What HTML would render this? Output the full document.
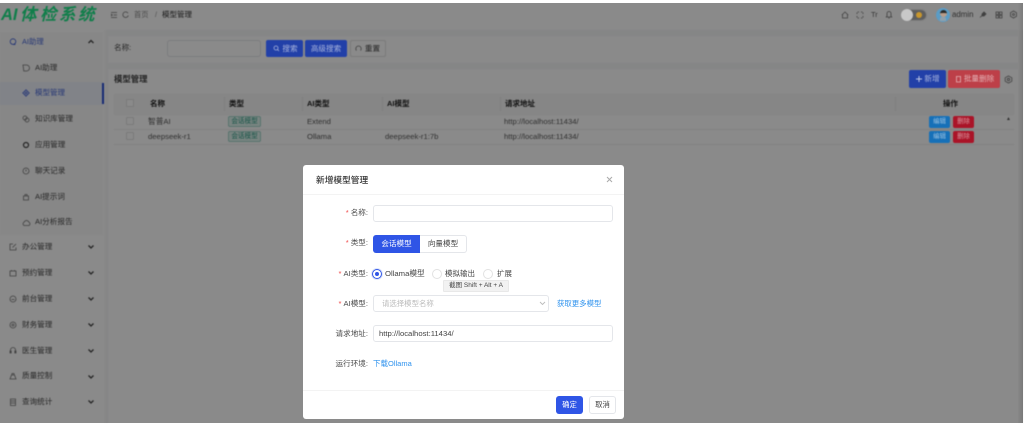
<!DOCTYPE html>
<html><head><meta charset="utf-8"><style>
html,body{margin:0;padding:0;width:1024px;height:424px;overflow:hidden;background:#fff}
*{box-sizing:border-box}
body{font-family:"Liberation Sans","Noto Sans CJK SC",sans-serif;color:#333}
.abs,.t{position:absolute}
.t{white-space:nowrap;line-height:14px}
#page{position:absolute;left:0;top:3px;width:1024px;height:420px;background:#fff;overflow:hidden;filter:blur(.45px)}
#main{position:absolute;left:0;top:-3px;width:1024px;height:424px}
#overlay{position:absolute;left:0;top:3px;width:1023px;height:420px;background:rgba(0,0,0,.46)}
#rstrip{position:absolute;left:1018px;top:3px;width:5px;height:420px;background:linear-gradient(90deg,rgba(0,0,0,0),rgba(0,0,0,.1))}
#top{position:absolute;left:0;top:0;width:1024px;height:424px;filter:blur(.45px)}
#modal{position:absolute;left:303px;top:165px;width:321px;height:254px;background:#fff;border-radius:3px;filter:blur(.35px)}
.m{font-size:7.6px;color:#4a4a4a}
.s{font-size:7.7px;color:#5a5a5a}
.h{font-size:7.5px;font-weight:bold;color:#222}
.ic{position:absolute;fill:none;stroke:#777;stroke-width:.8}
.chev{position:absolute;left:87px;width:8px;height:6px;fill:none;stroke:#444;stroke-width:1.3}
.btn{position:absolute;border-radius:2px;color:rgba(255,255,255,.6);font-size:7.6px;text-align:center;line-height:17px;white-space:nowrap}
.tag{position:absolute;left:228px;width:33px;height:11px;background:#dff4ee;border:1px solid #a4d8cc;border-radius:2px;font-size:6.6px;color:#2f9e86;text-align:center;line-height:9px}
.cb{position:absolute;left:126px;width:8px;height:8px;background:#fff;border:1px solid #e2e2e2;border-radius:1.5px}
.ed{position:absolute;left:929px;width:21px;height:12px;background:#1670b8;border-radius:2px;color:rgba(255,255,255,.55);font-size:6.4px;text-align:center;line-height:12px}
.de{position:absolute;left:953px;width:21px;height:12px;background:#aa1428;border-radius:2px;color:rgba(255,255,255,.55);font-size:6.4px;text-align:center;line-height:12px}
.inp{position:absolute;background:#fff;border:1px solid #e4e6ea;border-radius:3px;height:17px}
.lab{position:absolute;font-size:7.6px;color:#4a4a4a;text-align:right;white-space:nowrap;line-height:14px;width:63px;left:2px}
.lab b{color:#f04a4a;font-weight:normal;margin-right:2px}
.sep{position:absolute;top:97px;width:1px;height:14px;background:#ececec}
.lg{position:absolute;top:5px;font-size:16.5px;line-height:20px;font-weight:bold;font-style:italic;color:#107e4a;white-space:nowrap}
</style></head><body>
<div id="page"><div id="main">
  <div class="abs" style="left:0;top:0;width:1024px;height:424px;background:#fafafa"></div>
  <div class="abs" style="left:0;top:30px;width:104px;height:394px;background:#fff"></div>
  <div class="abs" style="left:106px;top:30px;width:912px;height:394px;background:#f6f7f8"></div>
  <div class="abs" style="left:0;top:3px;width:1024px;height:27px;background:#fff"></div>
  <div class="abs" style="left:0;top:32px;width:103px;height:23px;background:#fafafa"></div>
  <div class="abs" style="left:0;top:55px;width:103px;height:180px;background:#f9f9f9"></div>
  <div class="abs" style="left:0;top:82px;width:103px;height:23px;background:#eef2fb"></div>
  <div class="abs" style="left:102px;top:83px;width:1.5px;height:21px;background:#2b4fd8"></div>

  <!-- breadcrumb -->
  <svg class="ic" style="left:110px;top:11px" width="8" height="8" viewBox="0 0 8 8"><path d="M1 1.500h6M3.500 4H7M1 6.500h6M1 3l1.300 1L1 5"/></svg>
  <svg class="ic" style="left:122px;top:11px" width="7" height="8" viewBox="0 0 7 8"><path d="M6 2.200A2.800 2.800 0 1 0 6.300 4.500"/></svg>
  <div class="t" style="left:134px;top:8px;font-size:7.200px;color:#8a8a8a">首页</div>
  <div class="t" style="left:155px;top:8px;font-size:7.200px;color:#999">/</div>
  <div class="t" style="left:162px;top:8px;font-size:7.500px;color:#333">模型管理</div>

  <!-- header right -->
  <svg class="ic" style="left:841px;top:11px" width="8" height="8" viewBox="0 0 8 8"><path d="M.8 4 4 1l3.200 3M1.500 3.500V7h5V3.500"/></svg>
  <svg class="ic" style="left:856px;top:11px" width="8" height="8" viewBox="0 0 8 8"><path d="M1 3V1.500M1.500 1H3M5 1h1.500M7 1.500V3M7 5v1.500M6.500 7H5M3 7H1.500M1 6.500V5"/></svg>
  <div class="t" style="left:871px;top:8px;font-size:7.500px;color:#666">Tr</div>
  <svg class="ic" style="left:885px;top:10px" width="8" height="9" viewBox="0 0 8 9"><path d="M2 6V3.500a2 2 0 0 1 4 0V6l.7 1H1.300zM3.300 8h1.400"/></svg>
  <div class="t" style="left:952px;top:8px;font-size:7.900px;color:#5a5a5a">admin</div>
  <svg class="ic" style="left:979px;top:11px" width="8" height="8" viewBox="0 0 8 8"><path d="M1 6.500 3 4.500M3 3l2-2 2 2-2 2H3z" style="fill:#777"/></svg>
  <svg class="ic" style="left:995px;top:11px" width="8" height="8" viewBox="0 0 8 8"><path d="M1 1h2.500v2.500H1zM4.500 1H7v2.500H4.500zM1 4.500h2.500V7H1zM4.500 4.500H7V7H4.500z"/></svg>
  <svg class="ic" style="left:1009px;top:10px" width="9" height="9" viewBox="0 0 9 9"><path d="M4.500 1 7.500 2.700v3.600L4.500 8 1.500 6.300V2.700z"/><circle cx="4.500" cy="4.500" r="1"/></svg>

  <!-- sidebar items -->
  <svg class="ic" style="left:9px;top:38px;stroke:#3f5fd8" width="8" height="8" viewBox="0 0 8 8"><circle cx="4" cy="3.600" r="2.800"/><path d="M4 6.500h2.500"/></svg>
  <div class="t" style="left:22px;top:35px;font-size:7.400px;color:#4a68d8">AI助理</div>
  <svg class="chev" style="top:39px;left:87px;width:8px;height:5px" viewBox="0 0 8 5"><path d="M1.500 4 4 1.500 6.500 4"/></svg>

  <svg class="ic" style="left:22px;top:64px" width="8" height="8" viewBox="0 0 8 8"><path d="M1 1h3.500a3 3 0 0 1 0 6H1.800z"/></svg>
  <div class="t m" style="left:35px;top:61px">AI助理</div>
  <svg class="ic" style="left:22px;top:89px;stroke:#3f5fd8" width="8" height="8" viewBox="0 0 8 8"><path d="M4 .8 7.200 4 4 7.200.8 4z"/><circle cx="4" cy="4" r="1"/></svg>
  <div class="t" style="left:35px;top:86px;font-size:7.500px;color:#4a68d8">模型管理</div>
  <svg class="ic" style="left:22px;top:115px" width="8" height="8" viewBox="0 0 8 8"><circle cx="3" cy="3" r="2"/><circle cx="5" cy="5" r="2"/></svg>
  <div class="t m" style="left:35px;top:112px">知识库管理</div>
  <svg class="ic" style="left:22px;top:141px;stroke:#444;stroke-width:1.200" width="8" height="8" viewBox="0 0 8 8"><circle cx="4" cy="4" r="2.500"/></svg>
  <div class="t m" style="left:35px;top:138px">应用管理</div>
  <svg class="ic" style="left:22px;top:167px" width="8" height="8" viewBox="0 0 8 8"><circle cx="4" cy="4" r="3"/><path d="M4 2.500V4.500"/></svg>
  <div class="t m" style="left:35px;top:164px">聊天记录</div>
  <svg class="ic" style="left:22px;top:193px" width="8" height="8" viewBox="0 0 8 8"><path d="M1.500 3h5v4h-5zM3 3V1.500h2V3"/></svg>
  <div class="t m" style="left:35px;top:190px">AI提示词</div>
  <svg class="ic" style="left:22px;top:219px" width="9" height="8" viewBox="0 0 9 8"><path d="M2 6.500a2 2 0 0 1 .2-3.500 2.500 2.500 0 0 1 4.600 0A2 2 0 0 1 7 6.500z"/></svg>
  <div class="t m" style="left:35px;top:215px">AI分析报告</div>

  <svg class="ic" style="left:9px;top:243px" width="8" height="8" viewBox="0 0 8 8"><path d="M7 4.500V7H1V1h3M3.500 4.500 7 1"/></svg>
  <div class="t m" style="left:22px;top:240px">办公管理</div>
  <svg class="chev" style="top:244px" viewBox="0 0 8 6"><path d="M1.500 1.500 4 4 6.500 1.500"/></svg>
  <svg class="ic" style="left:9px;top:269px" width="8" height="8" viewBox="0 0 8 8"><path d="M1 2h6v5H1zM2.500 1v1.500M5.500 1v1.500"/></svg>
  <div class="t m" style="left:22px;top:266px">预约管理</div>
  <svg class="chev" style="top:270px" viewBox="0 0 8 6"><path d="M1.500 1.500 4 4 6.500 1.500"/></svg>
  <svg class="ic" style="left:9px;top:295px" width="8" height="8" viewBox="0 0 8 8"><circle cx="4" cy="4" r="3"/><path d="M2.500 4.500h3"/></svg>
  <div class="t m" style="left:22px;top:292px">前台管理</div>
  <svg class="chev" style="top:296px" viewBox="0 0 8 6"><path d="M1.500 1.500 4 4 6.500 1.500"/></svg>
  <svg class="ic" style="left:9px;top:321px" width="8" height="8" viewBox="0 0 8 8"><circle cx="4" cy="4" r="3"/><circle cx="4" cy="4" r="1"/></svg>
  <div class="t m" style="left:22px;top:318px">财务管理</div>
  <svg class="chev" style="top:322px" viewBox="0 0 8 6"><path d="M1.500 1.500 4 4 6.500 1.500"/></svg>
  <svg class="ic" style="left:9px;top:346px" width="8" height="8" viewBox="0 0 8 8"><path d="M1.500 7V4a2.500 2.500 0 0 1 5 0v3M1 5h1.200v2H1zM5.800 5H7v2H5.800z"/></svg>
  <div class="t m" style="left:22px;top:344px">医生管理</div>
  <svg class="chev" style="top:348px" viewBox="0 0 8 6"><path d="M1.500 1.500 4 4 6.500 1.500"/></svg>
  <svg class="ic" style="left:9px;top:372px" width="8" height="8" viewBox="0 0 8 8"><path d="M1 7 2.500 3h3L7 7zM3 3V1.500h2V3"/></svg>
  <div class="t m" style="left:22px;top:369px">质量控制</div>
  <svg class="chev" style="top:374px" viewBox="0 0 8 6"><path d="M1.500 1.500 4 4 6.500 1.500"/></svg>
  <svg class="ic" style="left:9px;top:398px" width="8" height="8" viewBox="0 0 8 8"><path d="M1.500 1h5v6.500h-5zM1.500 3h5M1.500 5h5"/></svg>
  <div class="t m" style="left:22px;top:395px">查询统计</div>
  <svg class="chev" style="top:399px" viewBox="0 0 8 6"><path d="M1.500 1.500 4 4 6.500 1.500"/></svg>

  <!-- search panel -->
  <div class="abs" style="left:108px;top:36px;width:910px;height:27px;background:#fff"></div>
  <div class="t" style="left:114px;top:41px;color:#4a4a4a;font-size:7.600px">名称:</div>
  <div class="inp" style="left:167px;top:40px;width:94px"></div>
  <div class="btn" style="left:350px;top:40px;width:36px;height:17px;background:#fff;border:1px solid #e2e2e2;color:#444;line-height:15px;padding-left:9px">重置</div>
  <svg class="ic" style="left:355px;top:45px" width="7" height="7" viewBox="0 0 7 7"><path d="M1.500 5.500A2.700 2.700 0 1 1 5.500 5.500"/></svg>

  <!-- table card -->
  <div class="abs" style="left:108px;top:69px;width:910px;height:355px;background:#fff"></div>
  <div class="t" style="left:114px;top:72px;font-size:8.400px;font-weight:bold;color:#444">模型管理</div>
  <svg class="ic" style="left:1004px;top:75px" width="9" height="9" viewBox="0 0 9 9"><path d="M4.500 1 7.800 2.700v3.600L4.500 8 1.200 6.300V2.700z"/><circle cx="4.500" cy="4.500" r="1.200"/></svg>

  <div class="abs" style="left:114px;top:94px;width:900px;height:21px;background:#f7f7f7"></div>
  <div class="sep" style="left:224px"></div><div class="sep" style="left:302px"></div><div class="sep" style="left:382px"></div><div class="sep" style="left:500px"></div><div class="sep" style="left:895px"></div>
  <div class="cb" style="top:99px"></div>
  <div class="t h" style="left:150px;top:97px">名称</div>
  <div class="t h" style="left:229px;top:97px">类型</div>
  <div class="t h" style="left:307px;top:97px">AI类型</div>
  <div class="t h" style="left:387px;top:97px">AI模型</div>
  <div class="t h" style="left:505px;top:97px">请求地址</div>
  <div class="t h" style="left:943px;top:97px">操作</div>

  <div class="cb" style="top:117px"></div>
  <div class="t s" style="left:148px;top:115px">智普AI</div>
  <div class="tag" style="top:116px">会话模型</div>
  <div class="t s" style="left:307px;top:115px">Extend</div>
  <div class="t s" style="left:504px;top:115px">http://localhost:11434/</div>
  <div class="abs" style="left:114px;top:129px;width:900px;height:1px;background:#eee"></div>

  <div class="cb" style="top:132px"></div>
  <div class="t s" style="left:148px;top:130px">deepseek-r1</div>
  <div class="tag" style="top:131px">会话模型</div>
  <div class="t s" style="left:307px;top:130px">Ollama</div>
  <div class="t s" style="left:385px;top:130px">deepseek-r1:7b</div>
  <div class="t s" style="left:504px;top:130px">http://localhost:11434/</div>
  <div class="abs" style="left:114px;top:144px;width:900px;height:1px;background:#eee"></div>
  <div class="t" style="left:1006px;top:112px;font-size:5px;color:#555">▲</div>
</div></div>

<div id="overlay"></div>
<div id="rstrip"></div>

<div id="top">
  <div class="lg" style="left:1px">AI</div>
  <div class="lg" style="left:20px">体</div>
  <div class="lg" style="left:40px">检</div>
  <div class="lg" style="left:59px">系</div>
  <div class="lg" style="left:78px">统</div>

  <div class="abs" style="left:901px;top:9px;width:26px;height:12px;border-radius:6px;background:#5e5e5e;border:1px solid #7f7f7f"></div>
  <div class="abs" style="left:901px;top:9px;width:12px;height:12px;border-radius:50%;background:#c8c8c8"></div>
  <div class="abs" style="left:916px;top:12px;width:6px;height:6px;border-radius:50%;background:#c8962c"></div>
  <div class="abs" style="left:936px;top:8px;width:14px;height:14px;border-radius:50%;background:#5a9cc6"></div>
  <div class="abs" style="left:939.500px;top:10px;width:7px;height:7px;border-radius:50%;background:#b89c8a;border-top:3px solid #2a2a2a"></div>
  <div class="abs" style="left:940px;top:17px;width:6px;height:4px;background:#8fa0ac;border-radius:2px 2px 0 0"></div>

  <div class="btn" style="left:266px;top:40px;width:37px;height:17px;background:#2240a8;padding-left:11px">搜索</div>
  <svg class="abs" style="left:273px;top:45px" width="7" height="7" viewBox="0 0 7 7"><circle cx="3" cy="3" r="2" fill="none" stroke="rgba(255,255,255,.6)" stroke-width=".8"/><path d="M4.500 4.500 6 6" stroke="rgba(255,255,255,.6)" stroke-width=".8"/></svg>
  <div class="btn" style="left:305px;top:40px;width:42px;height:17px;background:#2240a8">高级搜索</div>

  <div class="btn" style="left:909px;top:70px;width:37px;height:18px;background:#2240a8;line-height:18px;padding-left:9px">新增</div>
  <svg class="abs" style="left:915px;top:75px" width="8" height="8" viewBox="0 0 8 8"><path d="M4 1v6M1 4h6" stroke="rgba(255,255,255,.7)" stroke-width="1"/></svg>
  <div class="btn" style="left:948px;top:70px;width:52px;height:18px;background:#bd3f48;line-height:18px;padding-left:10px">批量删除</div>
  <svg class="abs" style="left:955px;top:75px" width="7" height="8" viewBox="0 0 7 8"><path d="M1.500 1.500h4V7h-4zM1 1.500h5" fill="none" stroke="rgba(255,255,255,.6)" stroke-width=".8"/></svg>

  <div class="ed" style="top:116px">编辑</div><div class="de" style="top:116px">删除</div>
  <div class="ed" style="top:131px">编辑</div><div class="de" style="top:131px">删除</div>
</div>

<div id="modal">
  <div class="t" style="left:13px;top:8px;font-size:8.700px;color:#333;font-weight:500">新增模型管理</div>
  <svg class="abs" style="left:303px;top:11px" width="7" height="7" viewBox="0 0 7 7"><path d="M1 1l5 5M6 1 1 6" stroke="#aaa" stroke-width="1" fill="none"/></svg>
  <div class="abs" style="left:0;top:29px;width:321px;height:1px;background:#f3f3f3"></div>

  <div class="lab" style="top:41px"><b>*</b>名称:</div>
  <div class="inp" style="left:70px;top:40px;width:240px"></div>

  <div class="lab" style="top:71px"><b>*</b>类型:</div>
  <div class="abs" style="left:70px;top:70px;width:47px;height:18px;background:#2f55e6;border-radius:3px 0 0 3px;color:#fff;font-size:7.600px;text-align:center;line-height:18px">会话模型</div>
  <div class="abs" style="left:117px;top:70px;width:47px;height:18px;background:#fff;border:1px solid #e4e6ea;border-left:0;border-radius:0 3px 3px 0;color:#444;font-size:7.600px;text-align:center;line-height:16px">向量模型</div>

  <div class="lab" style="top:102px"><b>*</b>AI类型:</div>
  <div class="abs" style="left:69px;top:104px;width:10px;height:10px;border-radius:50%;border:1px solid #2f55e6;box-shadow:0 0 0 1px #dfe6fc"></div>
  <div class="abs" style="left:72px;top:107px;width:4px;height:4px;border-radius:50%;background:#2f55e6"></div>
  <div class="t" style="left:82px;top:102px;font-size:7.700px;color:#444">Ollama模型</div>
  <div class="abs" style="left:129px;top:104px;width:10px;height:10px;border-radius:50%;border:1px solid #e2e2e2"></div>
  <div class="t" style="left:142px;top:102px;font-size:7.500px;color:#444">模拟输出</div>
  <div class="abs" style="left:180px;top:104px;width:10px;height:10px;border-radius:50%;border:1px solid #e2e2e2"></div>
  <div class="t" style="left:194px;top:102px;font-size:7.500px;color:#444">扩展</div>
  <div class="abs" style="left:140px;top:115px;width:66px;height:12px;background:#f2f2f2;border:1px solid #e8e8e8;border-radius:1px;font-size:6.500px;color:#444;text-align:center;line-height:10px;white-space:nowrap">截图 Shift + Alt + A</div>

  <div class="lab" style="top:132px"><b>*</b>AI模型:</div>
  <div class="inp" style="left:70px;top:130px;width:176px"></div>
  <div class="t" style="left:79px;top:132px;font-size:7.400px;color:#bbb">请选择模型名称</div>
  <svg class="abs" style="left:236px;top:136px" width="7" height="5" viewBox="0 0 7 5"><path d="M1 1l2.500 2.500L6 1" stroke="#bbb" stroke-width=".9" fill="none"/></svg>
  <div class="t" style="left:254px;top:132px;font-size:7.400px;color:#2e92ee">获取更多模型</div>

  <div class="lab" style="top:162px">请求地址:</div>
  <div class="inp" style="left:70px;top:160px;width:240px"></div>
  <div class="t" style="left:76px;top:162px;font-size:7.700px;color:#444">http://localhost:11434/</div>

  <div class="lab" style="top:192px">运行环境:</div>
  <div class="t" style="left:70px;top:192px;font-size:7.500px;color:#2e92ee">下载Ollama</div>

  <div class="abs" style="left:0;top:225px;width:321px;height:1px;background:#f3f3f3"></div>
  <div class="abs" style="left:253px;top:231px;width:27px;height:18px;background:#2f55e6;border-radius:3px;color:#fff;font-size:7.400px;text-align:center;line-height:18px">确定</div>
  <div class="abs" style="left:286px;top:231px;width:27px;height:18px;background:#fff;border:1px solid #e4e6ea;border-radius:3px;color:#444;font-size:7.400px;text-align:center;line-height:16px">取消</div>
</div>
</body></html>
